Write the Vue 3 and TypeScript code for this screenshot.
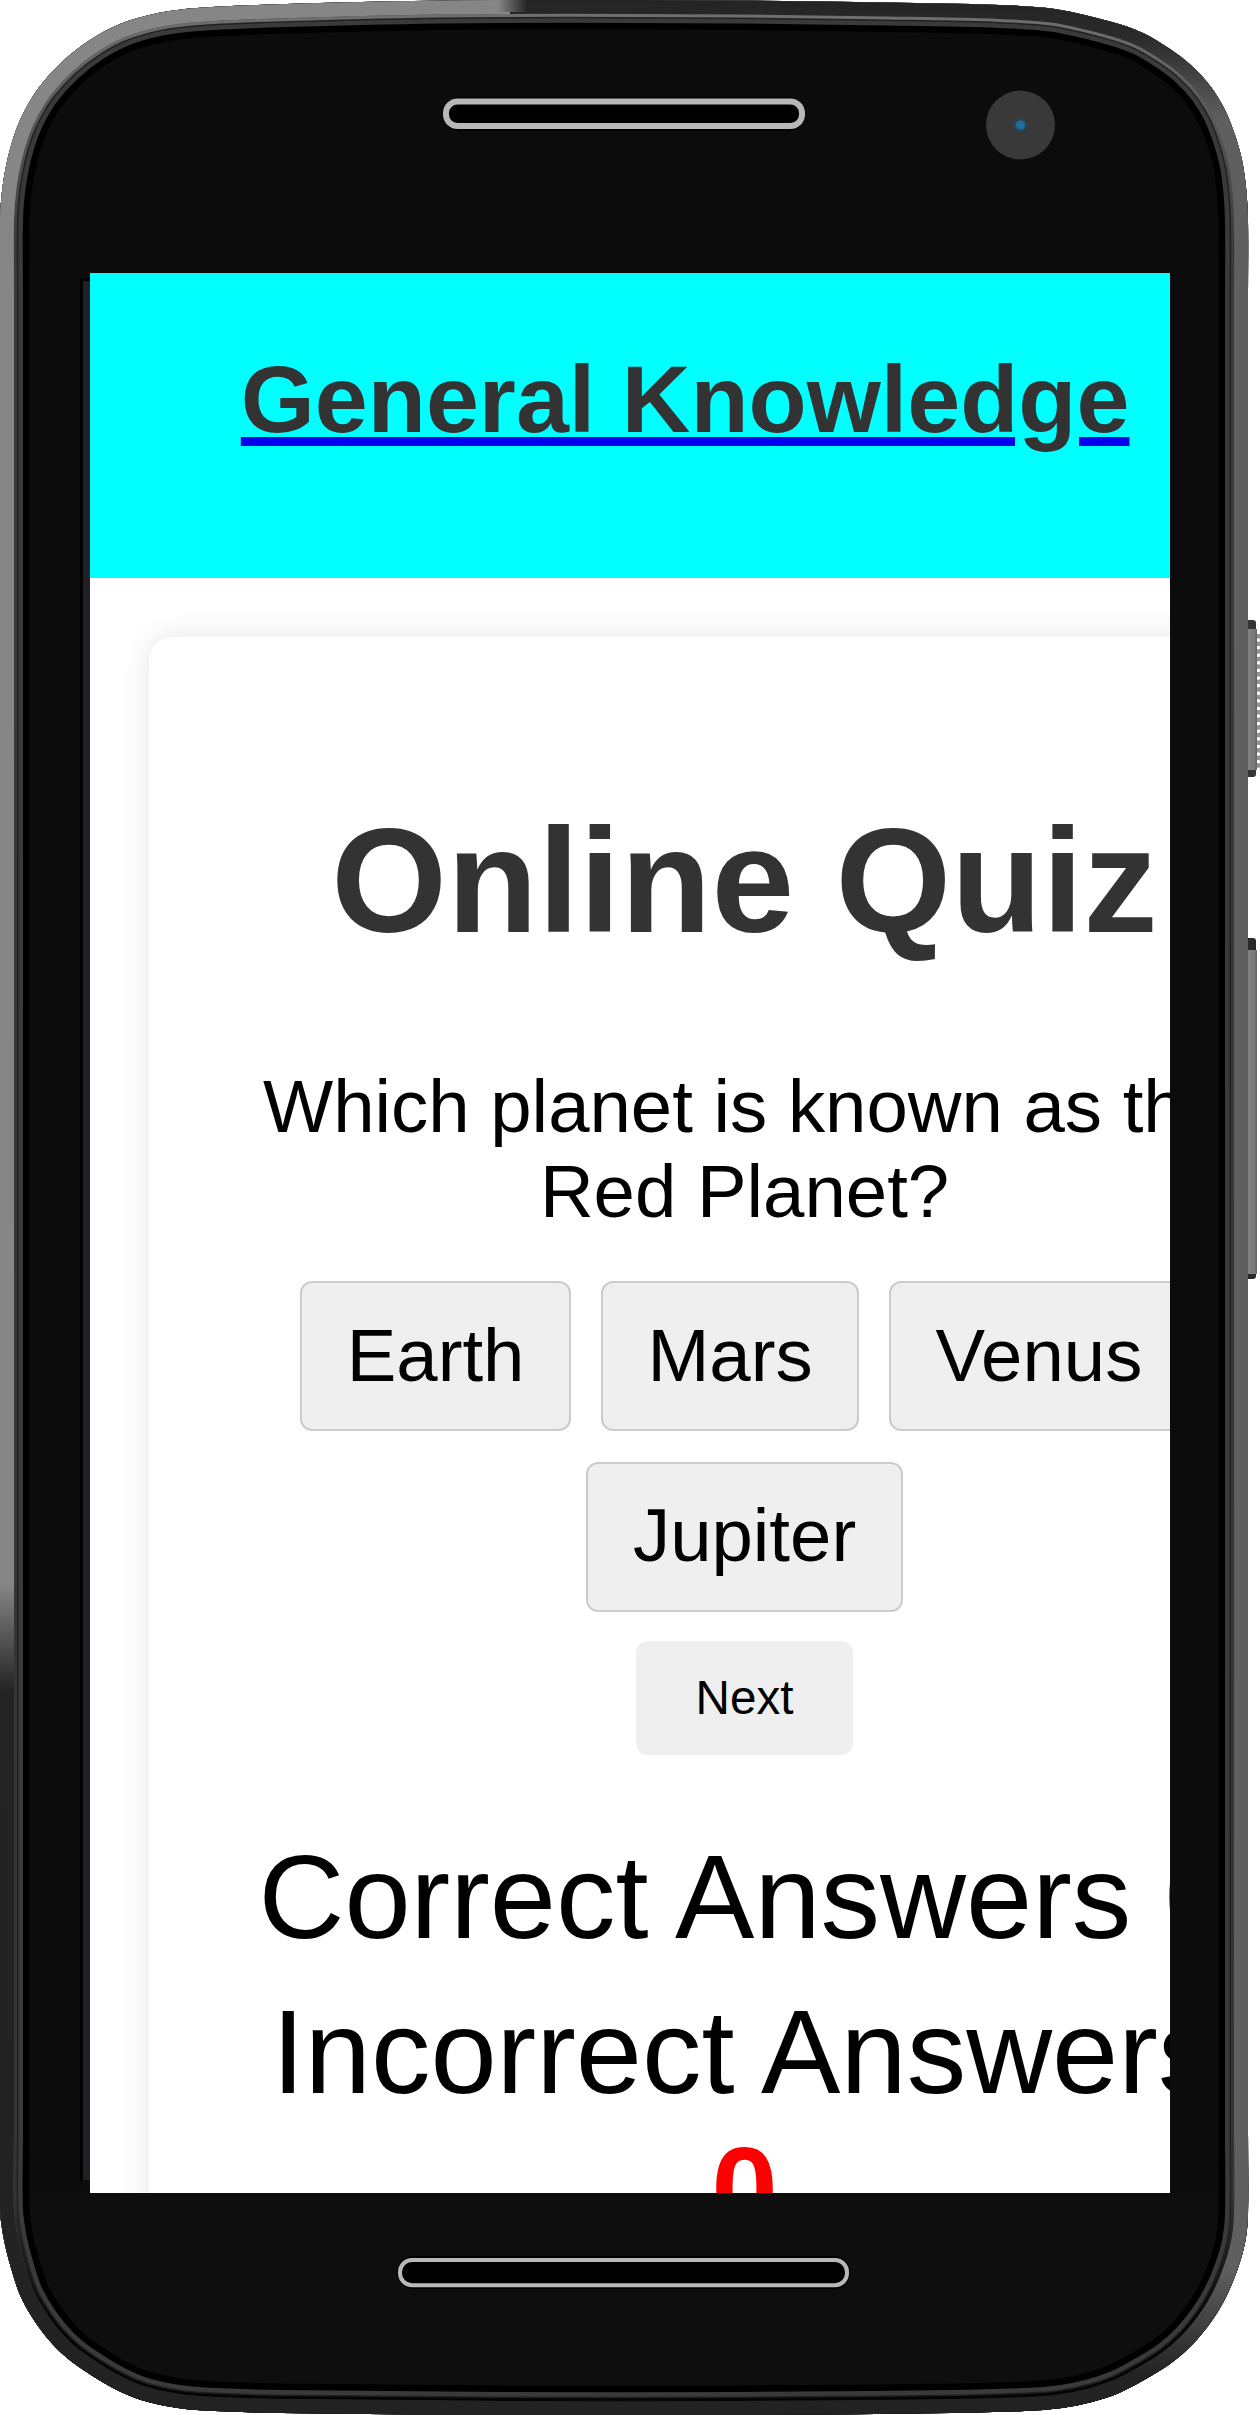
<script setup lang="ts">
import { ref } from 'vue'

type Point = [number, number]

// Contour of the handset body, clockwise from the left end of the top edge.
const contour: Point[] = [
  [500, 0], [740, 0.5], [887, 2.5], [1000, 5], [1055, 9], [1112, 22], [1143, 33], [1170, 49], [1192, 66],
  [1211, 87], [1225, 110], [1235, 135], [1242, 160], [1246, 187], [1248, 220], [1248, 300], [1248, 2130],
  [1248, 2215], [1245, 2243], [1237, 2271], [1225, 2299], [1211, 2322], [1192, 2345], [1170, 2364],
  [1144, 2380], [1119, 2393], [1092, 2402], [1062, 2408], [1025, 2411], [951, 2413], [740, 2415],
  [500, 2415], [281, 2413], [215, 2411], [178, 2408], [141, 2400], [113, 2388], [88, 2373], [67, 2358],
  [48, 2339], [32, 2317], [20, 2295], [11, 2268], [4, 2240], [0, 2210], [0, 2130], [0, 300], [0, 220],
  [2.5, 187], [8, 157], [16, 130], [26, 108], [40, 86], [63, 61], [90, 40], [120, 24], [158, 13],
  [197, 8], [257, 5], [361, 2],
]

function smoothClosed(points: Point[]): string {
  const n = points.length
  const f = (v: number) => v.toFixed(2)
  let d = `M${f(points[0][0])} ${f(points[0][1])}`
  for (let i = 0; i < n; i++) {
    const a = points[(i + n - 1) % n]
    const b = points[i]
    const c = points[(i + 1) % n]
    const e = points[(i + 2) % n]
    const span = Math.hypot(c[0] - b[0], c[1] - b[1])
    const before = Math.hypot(c[0] - a[0], c[1] - a[1])
    const after = Math.hypot(e[0] - b[0], e[1] - b[1])
    const k = span / 3
    const x1 = b[0] + ((c[0] - a[0]) / before) * k
    const y1 = b[1] + ((c[1] - a[1]) / before) * k
    const x2 = c[0] - ((e[0] - b[0]) / after) * k
    const y2 = c[1] - ((e[1] - b[1]) / after) * k
    d += ` C${f(x1)} ${f(y1)} ${f(x2)} ${f(y2)} ${f(c[0])} ${f(c[1])}`
  }
  return d + ' Z'
}

const outline = smoothClosed(contour)

const options = ['Earth', 'Mars', 'Venus', 'Jupiter']
const correct = ref<number>(0)
const incorrect = ref<number>(0)
const ridges = Array.from({ length: 18 }, (_, i) => 634 + i * 7.6)
</script>

<template>
  <div class="phone">
    <svg class="shell" viewBox="0 0 1260 2415" aria-hidden="true">
      <defs>
        <clipPath id="body-clip"><path :d="outline" /></clipPath>
        <clipPath id="left-half"><rect x="0" y="0" width="510" height="2415" /></clipPath>
        <linearGradient id="left-rim" gradientUnits="userSpaceOnUse" x1="0" y1="0" x2="0" y2="2415">
          <stop offset="0" stop-color="#868686" />
          <stop offset="0.656" stop-color="#868686" />
          <stop offset="0.7" stop-color="#242424" />
          <stop offset="1" stop-color="#222222" />
        </linearGradient>
        <linearGradient id="right-rim" gradientUnits="userSpaceOnUse" x1="0" y1="0" x2="0" y2="2415">
          <stop offset="0" stop-color="#242424" />
          <stop offset="0.015" stop-color="#2a2a2a" />
          <stop offset="0.05" stop-color="#5f5f5f" />
          <stop offset="0.94" stop-color="#5f5f5f" />
          <stop offset="0.983" stop-color="#232323" />
          <stop offset="1" stop-color="#222222" />
        </linearGradient>
        <linearGradient id="top-blend" x1="0" y1="0" x2="1" y2="0">
          <stop offset="0" stop-color="#868686" />
          <stop offset="1" stop-color="#222222" />
        </linearGradient>
        <linearGradient id="bezel" gradientUnits="userSpaceOnUse" x1="0" y1="0" x2="0" y2="2415">
          <stop offset="0" stop-color="#727272" />
          <stop offset="0.1" stop-color="#3b3b3b" />
          <stop offset="0.91" stop-color="#333333" />
          <stop offset="0.96" stop-color="#060606" />
          <stop offset="1" stop-color="#050505" />
        </linearGradient>
        <linearGradient id="side-key" x1="0" y1="0" x2="1" y2="0">
          <stop offset="0" stop-color="#828282" />
          <stop offset="0.7" stop-color="#7a7a7a" />
          <stop offset="1" stop-color="#666666" />
        </linearGradient>
      </defs>

      <rect x="1244" y="620" width="12" height="157" rx="3" fill="#343436" />
      <rect x="1247" y="629" width="10" height="141" fill="url(#side-key)" />
      <rect v-for="y in ridges" :key="y" x="1257" :y="y" width="3" height="4.5" fill="#929292" />
      <rect x="1244" y="938" width="12" height="341" rx="3" fill="#29292b" />
      <rect x="1247" y="950" width="10" height="324" fill="url(#side-key)" />

      <g clip-path="url(#body-clip)">
        <path :d="outline" fill="#0c0c0c" />
        <rect x="0" y="2193" width="1248" height="222" fill="#0e0e0e" />
        <g fill="none">
          <path :d="outline" stroke="#000000" stroke-width="59" />
          <path :d="outline" stroke="#3a3a3b" stroke-width="46" />
          <path :d="outline" stroke="#202021" stroke-width="37" />
          <path :d="outline" stroke="url(#bezel)" stroke-width="34" />
          <path :d="outline" stroke="url(#right-rim)" stroke-width="28" />
          <path :d="outline" stroke="url(#left-rim)" stroke-width="28" clip-path="url(#left-half)" />
        </g>
        <rect x="498" y="0" width="30" height="12" fill="url(#top-blend)" />
      </g>

      <path d="M81.500 2181 V280 H90" fill="none" stroke="#000000" stroke-width="3" />
      <rect x="83" y="281" width="7" height="1899" fill="#202126" />
      <rect x="443" y="97" width="362" height="34" rx="17" fill="#000000" />
      <rect x="446" y="101.500" width="356" height="24.500" rx="11.500" fill="#000000" stroke="#b9b7b8" stroke-width="6" />
      <rect x="397" y="2256" width="453" height="33" rx="16" fill="#000000" />
      <rect x="400" y="2260" width="447" height="25.300" rx="12" fill="#000000" stroke="#b7b8b8" stroke-width="4" />
      <circle cx="1020.500" cy="125" r="34.500" fill="#393939" />
      <circle cx="1020.500" cy="125" r="7" fill="#2c4552" />
      <circle cx="1020.500" cy="125" r="4.500" fill="#1e6e9d" />
    </svg>

    <main class="screen">
      <header class="banner">
        <a class="banner-link"><h2>General Knowledge</h2></a>
      </header>
      <section class="card">
        <h1>Online Quiz</h1>
        <p class="question">Which planet is known as the Red Planet?</p>
        <div class="options">
          <button v-for="option in options" :key="option" type="button" class="option">{{ option }}</button>
        </div>
        <button type="button" class="next">Next</button>
        <p class="score">Correct Answers <b class="right">{{ correct }}</b></p>
        <p class="score">Incorrect Answers <b class="wrong">{{ incorrect }}</b></p>
      </section>
    </main>
  </div>
</template>

<style>
body {
  margin: 0;
  background: #ffffff;
}
</style>

<style scoped>
.phone {
  position: relative;
  box-sizing: border-box;
  width: 1260px;
  height: 2415px;
  padding: 273px 90px 222px;
  overflow: hidden;
  font-family: "Liberation Sans", Arial, sans-serif;
}

.shell {
  position: absolute;
  inset: 0;
  width: 1260px;
  height: 2415px;
}

.screen {
  position: relative;
  width: 1080px;
  height: 1920px;
  overflow: hidden;
  background: #ffffff;
  color: #000000;
}

.banner {
  box-sizing: border-box;
  height: 304.600px;
  padding: 71.500px 0 0 150.800px;
  background: #00ffff;
}

.banner-link {
  display: block;
  color: #0000ee;
  text-decoration: underline;
}

.banner h2 {
  margin: 0;
  color: #333333;
  font-size: 95.200px;
  line-height: 109px;
  white-space: nowrap;
}

.card {
  box-sizing: border-box;
  display: flex;
  flex-direction: column;
  align-items: center;
  width: 1190.500px;
  height: 2000px;
  margin: 59.400px 0 0 59.300px;
  padding: 158px 89.250px 0;
  border-radius: 23.800px;
  background: #ffffff;
  box-shadow: 0 0 29.750px rgba(0, 0, 0, 0.1);
  text-align: center;
}

.card h1 {
  margin: 0 0 97.700px;
  color: #333333;
  font-size: 148.750px;
  line-height: 171px;
}

.question {
  margin: 0 0 47.300px;
  font-size: 74.375px;
  line-height: 85px;
}

.options {
  display: flex;
  flex-wrap: wrap;
  justify-content: center;
  gap: 30.500px 29.750px;
}

button {
  color: #000000;
  font-family: inherit;
  background: #efefef;
}

.option {
  padding: 29.600px 44.600px 31.600px;
  border: 2px solid #cccccc;
  border-radius: 12px;
  font-size: 74.375px;
  line-height: 85px;
}

.next {
  margin: 28.700px 0 73.600px;
  padding: 29.500px 60px;
  border: 0;
  border-radius: 12px;
  font-size: 47.600px;
  line-height: 55px;
}

.score {
  margin: 0 0 18px;
  font-size: 119px;
  line-height: 137px;
}

.right {
  color: #008000;
}

.wrong {
  color: #ff0000;
}
</style>
